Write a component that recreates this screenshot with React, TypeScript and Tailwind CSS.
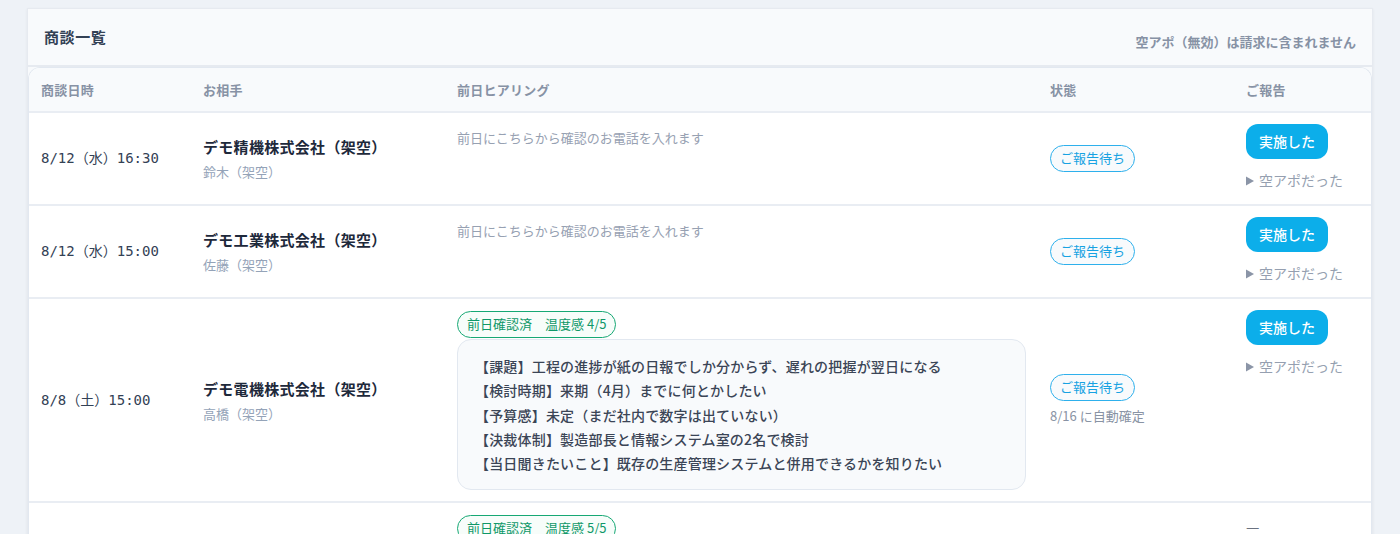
const jp = "font-['Noto_Sans_CJK_JP','Noto_Sans',sans-serif]";
const mono = "font-['DejaVu_Sans_Mono','Noto_Sans_CJK_JP',monospace]";

type Deal = {
  date: string;
  company: string;
  contact: string;
  confirmed?: string;
  notes?: string[];
  autoConfirm?: string;
  pending: boolean;
};

const deals: Deal[] = [
  {
    date: "8/12（水）16:30",
    company: "デモ精機株式会社（架空）",
    contact: "鈴木（架空）",
    pending: true,
  },
  {
    date: "8/12（水）15:00",
    company: "デモ工業株式会社（架空）",
    contact: "佐藤（架空）",
    pending: true,
  },
  {
    date: "8/8（土）15:00",
    company: "デモ電機株式会社（架空）",
    contact: "高橋（架空）",
    confirmed: "前日確認済　温度感 4/5",
    notes: [
      "【課題】工程の進捗が紙の日報でしか分からず、遅れの把握が翌日になる",
      "【検討時期】来期（4月）までに何とかしたい",
      "【予算感】未定（まだ社内で数字は出ていない）",
      "【決裁体制】製造部長と情報システム室の2名で検討",
      "【当日聞きたいこと】既存の生産管理システムと併用できるかを知りたい",
    ],
    autoConfirm: "8/16 に自動確定",
    pending: true,
  },
  {
    date: "8/6（木）11:00",
    company: "デモ化成株式会社（架空）",
    contact: "田中（架空）",
    confirmed: "前日確認済　温度感 5/5",
    notes: [
      "【課題】在庫の数字が倉庫ごとにばらばらで、月末の棚卸しに時間がかかる",
      "【検討時期】今期中に導入したい",
      "【予算感】年間300万円程度",
      "【決裁体制】社長が最終判断",
      "【当日聞きたいこと】導入までの期間とサポート体制",
    ],
    pending: false,
  },
];

const grid = "grid grid-cols-[162px_254px_593px_196px_1fr]";

function Triangle() {
  return (
    <svg width="8" height="10" viewBox="0 0 8 10" className="mr-[5px] shrink-0">
      <path d="M0 0.5 L8 5 L0 9.5 Z" fill="#8b95a7" />
    </svg>
  );
}

function DealRow({ deal }: { deal: Deal }) {
  return (
    <div className={`${grid} border-b-2 border-[#e9edf3]`}>
      <div className="flex items-center pl-3">
        <span className={`${mono} text-[14px] text-[#334155]`}>{deal.date}</span>
      </div>
      <div className="flex flex-col justify-center pl-3">
        <span className="text-[15px] leading-[22px] font-bold tracking-[0.02em] text-[#1e293b]">
          {deal.company}
        </span>
        <span className="mt-[5px] text-[13px] leading-[18px] text-[#94a3b8]">{deal.contact}</span>
      </div>
      <div className="px-3 pt-3 pb-[11px]">
        {deal.confirmed ? (
          <div className="flex flex-col items-start">
            <span className="h-[27px] rounded-full border-[1.5px] border-[#16a874] bg-[#f7fdfa] px-[9px] text-[13px] leading-[24px] text-[#0f9868]">
              {deal.confirmed}
            </span>
            <div className="mt-[1px] w-full rounded-[14px] border border-[#e2e8f0] bg-[#f8fafc] px-[17px] py-[14px]">
              {deal.notes?.map((n) => (
                <p
                  key={n}
                  className="text-[14px] leading-[24.3px] font-medium tracking-[0.013em] text-[#3b4556]"
                >
                  {n}
                </p>
              ))}
            </div>
          </div>
        ) : (
          <p className="pt-[3px] text-[13px] leading-[20px] text-[#97a1b2]">
            前日にこちらから確認のお電話を入れます
          </p>
        )}
      </div>
      <div className="flex flex-col items-start justify-center pl-3">
        {deal.pending && (
          <span className="h-[27px] rounded-full border-[1.5px] border-[#2eb0ec] bg-[#f8fafc] px-[9px] text-[13px] leading-[24px] text-[#17a2e2]">
            ご報告待ち
          </span>
        )}
        {deal.autoConfirm && (
          <span className="mt-[5px] text-[13px] leading-[20px] text-[#8993a4]">{deal.autoConfirm}</span>
        )}
      </div>
      <div className="pl-3 pt-[11px] pb-[13px]">
        {deal.pending ? (
          <div className="flex flex-col items-start">
            <button className="h-[35px] rounded-[12px] bg-[#0caeea] px-[13px] text-[14px] font-medium text-white">
              実施した
            </button>
            <div className="mt-[11px] flex items-center text-[14px] leading-[21px] text-[#959fb0]">
              <Triangle />
              空アポだった
            </div>
          </div>
        ) : (
          <span className="text-[15px] leading-[24px] text-[#6b7280]">—</span>
        )}
      </div>
    </div>
  );
}

export default function App() {
  return (
    <div className={`${jp} min-h-screen bg-[#eef2f7] pt-[8px]`}>
      <div className="mx-[27px] border border-[#e6eaf0] bg-[#f8fafc] shadow-[0_1px_3px_rgba(15,23,42,0.06)]">
        <div className="flex h-[58px] items-center justify-between border-b-2 border-[#e6eaf0] px-[16px]">
          <h2 className="text-[15px] font-bold tracking-[0.04em] text-[#334155]">商談一覧</h2>
          <span className="mt-[9px] text-[13px] font-semibold text-[#8792a5]">
            空アポ（無効）は請求に含まれません
          </span>
        </div>
        <div className="overflow-hidden rounded-t-[12px] border-x border-t border-[#e2e8f0] bg-white">
          <div
            className={`${grid} h-[45px] items-center border-b-2 border-[#e9edf3] bg-[#f8fafc] text-[13px] font-semibold tracking-[0.02em] text-[#8792a5]`}
          >
            <span className="pl-3">商談日時</span>
            <span className="pl-3">お相手</span>
            <span className="pl-3">前日ヒアリング</span>
            <span className="pl-3">状態</span>
            <span className="pl-3">ご報告</span>
          </div>
          {deals.map((d) => (
            <DealRow key={d.date} deal={d} />
          ))}
        </div>
      </div>
    </div>
  );
}
